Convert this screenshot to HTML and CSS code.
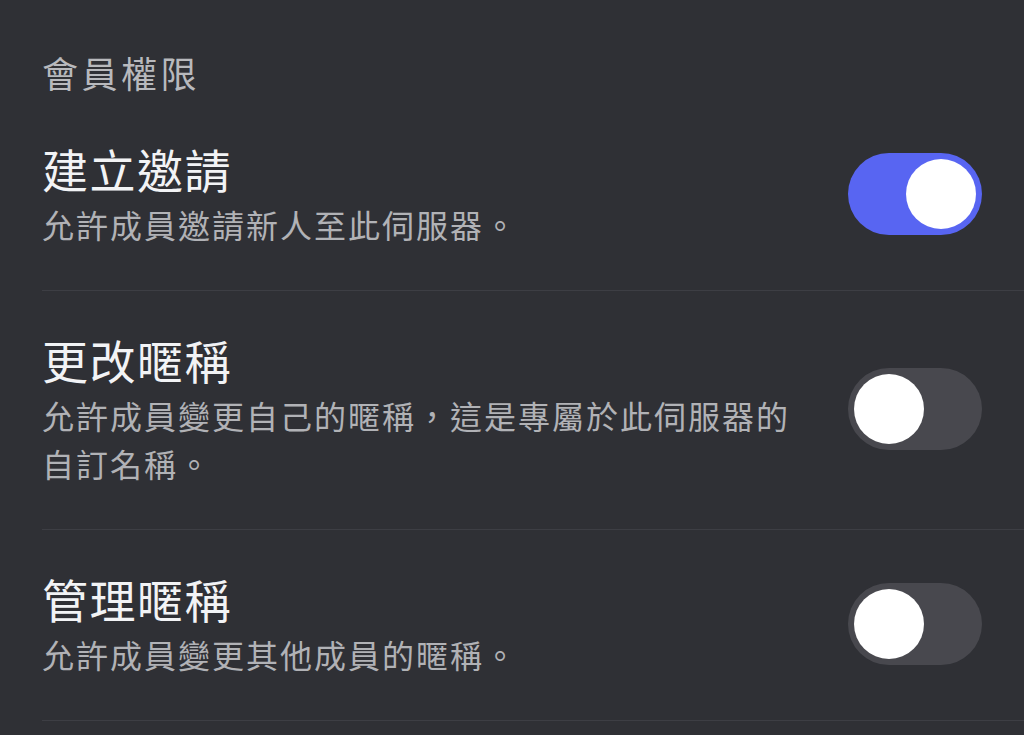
FILE: index.html
```html
<!DOCTYPE html>
<html lang="zh-Hant">
<head>
    <meta charset="UTF-8">
    <meta name="viewport" content="width=device-width, initial-scale=1.0">
    <title>會員權限</title>
    <link rel="stylesheet" href="styles.css">
</head>
<body>
<div class="section">
    <h2 class="section-title">會員權限</h2>

    <div class="perm">
        <div class="perm-text">
            <div class="perm-name">建立邀請</div>
            <div class="perm-desc">允許成員邀請新人至此伺服器。</div>
        </div>
        <div class="switch on"><span class="knob"></span></div>
    </div>

    <div class="perm">
        <div class="perm-text">
            <div class="perm-name">更改暱稱</div>
            <div class="perm-desc">允許成員變更自己的暱稱，這是專屬於此伺服器的自訂名稱。</div>
        </div>
        <div class="switch"><span class="knob"></span></div>
    </div>

    <div class="perm">
        <div class="perm-text">
            <div class="perm-name">管理暱稱</div>
            <div class="perm-desc">允許成員變更其他成員的暱稱。</div>
        </div>
        <div class="switch"><span class="knob"></span></div>
    </div>
</div>
</body>
</html>
```

FILE: styles.css
```css
body {
    margin: 0;
    background-color: #2f3035;
    font-family: "Noto Sans CJK TC", "Noto Sans", sans-serif;
}
.section {
    padding: 48px 0 0 42px;
}
.section-title {
    margin: 0 0 4px;
    font-size: 36px;
    line-height: 48px;
    font-weight: 400;
    letter-spacing: 3.5px;
    color: #b8b9bd;
}
.perm {
    display: flex;
    align-items: center;
    gap: 42px;
    padding: 40px 42px 42px 0;
    border-bottom: 1px solid #3d3e44;
}
.perm-text {
    flex: 1;
}
.perm-name {
    font-size: 46px;
    line-height: 56px;
    letter-spacing: 1.5px;
    color: #f2f3f5;
    margin-bottom: 4px;
}
.perm-desc {
    font-size: 32px;
    line-height: 48px;
    letter-spacing: 2px;
    color: #b1b2b6;
}
.switch {
    flex: none;
    width: 134px;
    height: 82px;
    border-radius: 41px;
    background-color: #48484e;
    box-sizing: border-box;
    padding: 6px;
    display: flex;
}
.switch.on {
    background-color: #5865f2;
    justify-content: flex-end;
}
.knob {
    width: 70px;
    height: 70px;
    border-radius: 50%;
    background-color: #fff;
}
```
